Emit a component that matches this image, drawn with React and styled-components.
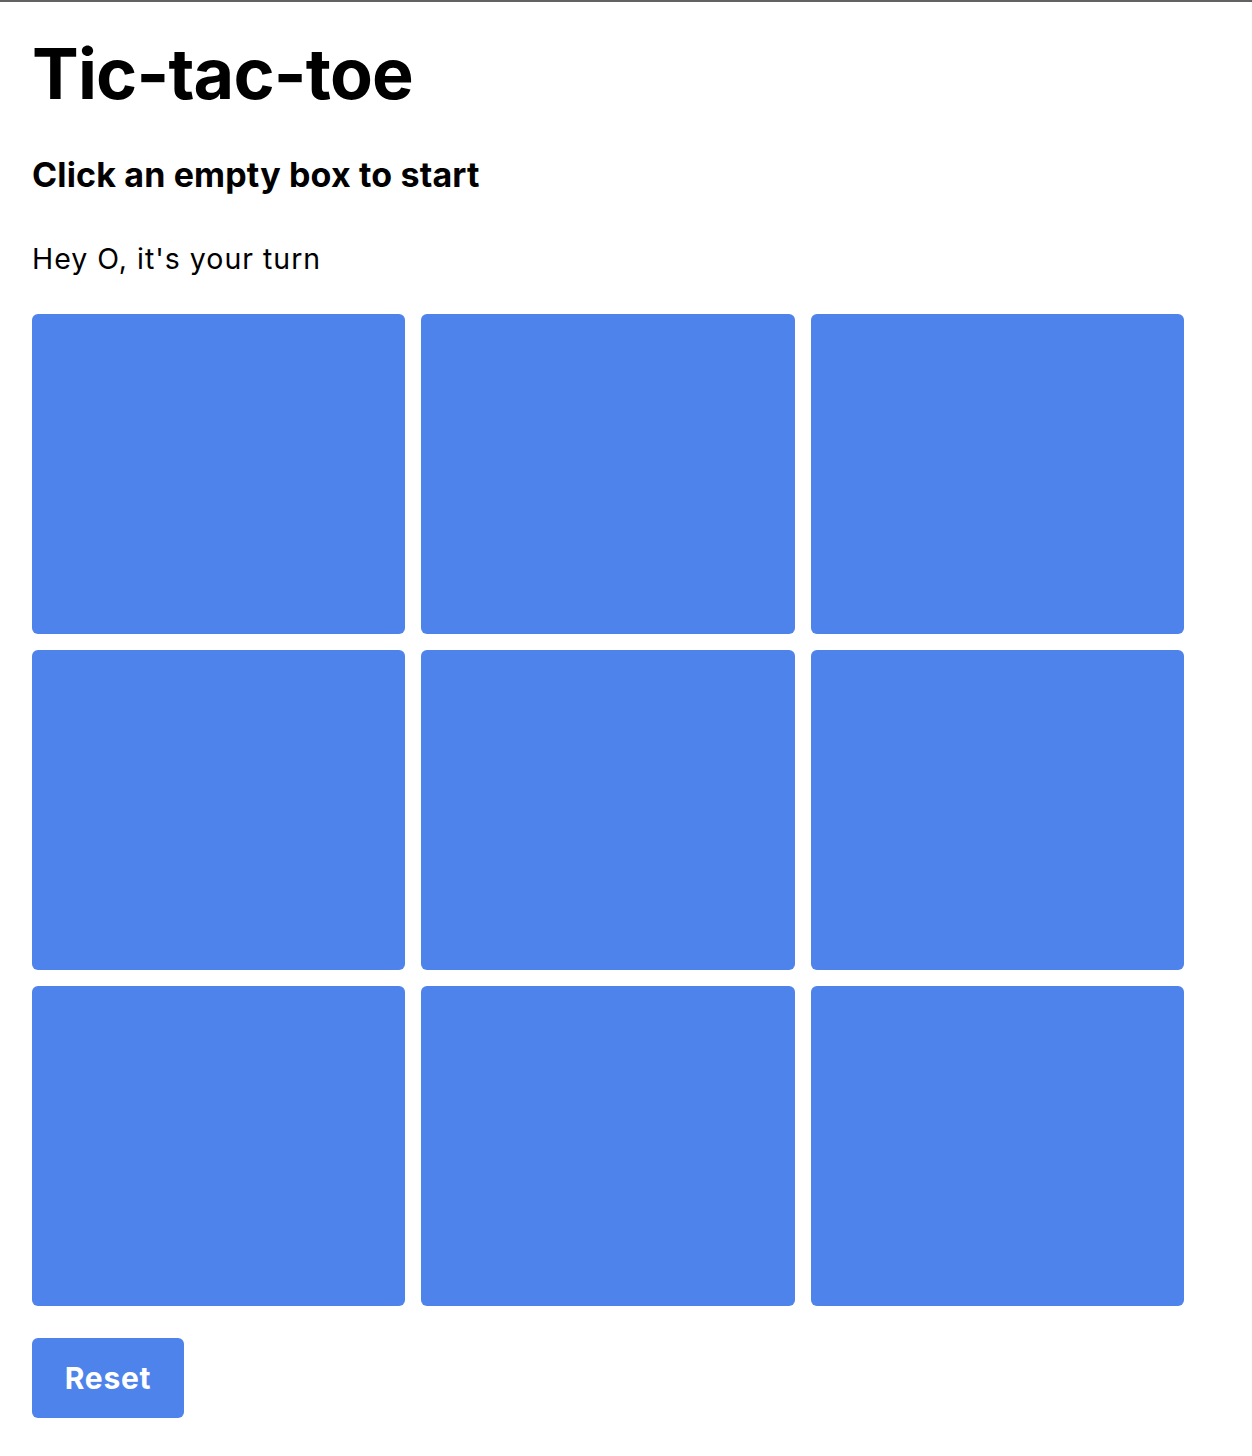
import styled, { createGlobalStyle } from 'styled-components';

const GlobalStyle = createGlobalStyle`
    body {
        margin: 0;
        background: #ffffff;
        font-family: Inter, "Liberation Sans", sans-serif;
        color: #000000;
    }
`;

const BOARD = [null, null, null, null, null, null, null, null, null];

function App() {
    return (
        <>
            <GlobalStyle />
            <Page>
                <Title>Tic-tac-toe</Title>
                <Subtitle>Click an empty box to start</Subtitle>
                <Status>Hey O, it's your turn</Status>
                <Board>
                    {BOARD.map((value, i) => (
                        <Cell key={i}>{value}</Cell>
                    ))}
                </Board>
                <ResetButton>Reset</ResetButton>
            </Page>
        </>
    );
}
export default App;

const Page = styled.div`
    border-top: 2px solid #626262;
    padding: 36px 32px 38px 32px;
    display: flex;
    flex-direction: column;
    align-items: flex-start;
`;

const Title = styled.h1`
    margin: 0;
    font-size: 70px;
    line-height: 72px;
    font-weight: 700;
    letter-spacing: -0.8px;
`;

const Subtitle = styled.h2`
    margin: 45px 0 0 0;
    font-size: 34px;
    line-height: 40px;
    font-weight: 700;
    letter-spacing: 0.15px;
`;

const Status = styled.p`
    margin: 48px 0 0 0;
    font-size: 28.5px;
    line-height: 32px;
    font-weight: 400;
    letter-spacing: 1px;
`;

const Board = styled.div`
    margin-top: 39px;
    width: 1152px;
    display: grid;
    grid-template-columns: repeat(3, 1fr);
    grid-auto-rows: 320px;
    gap: 16px;
`;

const Cell = styled.button`
    border: none;
    border-radius: 6px;
    background: #4e83ec;
    padding: 0;
    cursor: pointer;
`;

const ResetButton = styled.button`
    margin-top: 32px;
    width: 152px;
    height: 80px;
    border: none;
    border-radius: 6px;
    background: #4e83ec;
    color: #ffffff;
    font-family: Inter, "Liberation Sans", sans-serif;
    font-size: 30px;
    font-weight: 700;
    letter-spacing: 0.7px;
    cursor: pointer;
`;
